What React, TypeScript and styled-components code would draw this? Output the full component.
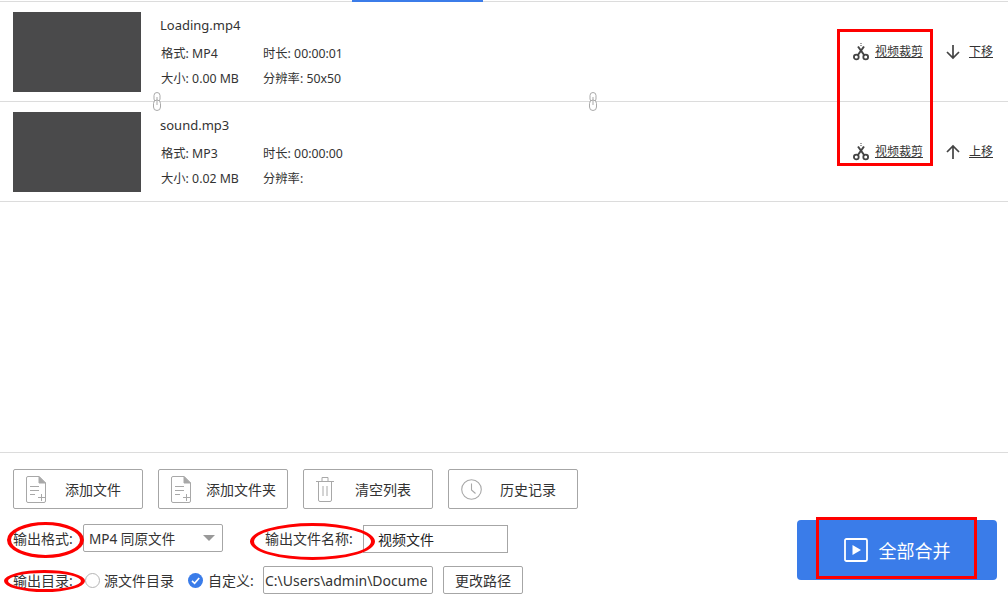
import React from "react";
import styled, { createGlobalStyle } from "styled-components";

const GlobalStyle = createGlobalStyle`
  html, body {
    margin: 0;
    padding: 0;
    background: #fff;
    font-family: "Noto Sans", "Noto Sans CJK SC", sans-serif;
    color: #333;
  }
  * { box-sizing: border-box; }
`;

const Page = styled.div`
  position: relative;
  width: 1008px;
  height: 601px;
  overflow: hidden;
  display: flex;
  flex-direction: column;
  background: #fff;
`;

const TabBar = styled.div`
  height: 2px;
  padding-left: 352px;
  border-bottom: 1px solid #dcdcdc;
  flex: none;
`;

const ActiveTab = styled.div`
  width: 131px;
  height: 2px;
  background: #3b7ce9;
`;

const List = styled.div`
  flex: 1;
`;

const Row = styled.div`
  height: 100px;
  display: flex;
  align-items: flex-start;
  padding: 10px 15px 0 13px;
  border-bottom: 1px solid #dcdcdc;
`;

const Thumb = styled.div`
  width: 128px;
  height: 80px;
  background: #4a4a4b;
  flex: none;
`;

const Info = styled.div`
  margin-left: 19px;
  width: 300px;
`;

const FileName = styled.div`
  font-size: 13px;
  line-height: 18px;
  margin-top: 4px;
  margin-bottom: 7px;
`;

const MetaGrid = styled.div`
  display: grid;
  grid-template-columns: 102px 1fr;
  grid-auto-rows: 25px;
  font-size: 12.3px;
  line-height: 25px;
  padding-left: 1px;
`;

const Actions = styled.div`
  margin-left: auto;
  display: flex;
  align-items: center;
  height: 18px;
  margin-top: 31px;
`;

const ActionIcon = styled.svg`
  width: 16px;
  height: 18px;
  flex: none;
  color: #444;
`;

const ActionLink = styled.a<{ $gap: number }>`
  font-size: 12px;
  line-height: 18px;
  color: #333;
  text-decoration: underline;
  margin-left: ${(p) => p.$gap}px;
`;

const ActionGroup = styled.div<{ $left: number }>`
  display: flex;
  align-items: center;
  margin-left: ${(p) => p.$left}px;
`;

const Footer = styled.div`
  flex: none;
  height: 149px;
  border-top: 1px solid #dcdcdc;
  padding: 16px 11px 0 13px;
`;

const Toolbar = styled.div`
  display: flex;
  gap: 15px;
`;

const ToolButton = styled.button`
  width: 130px;
  height: 40px;
  padding: 0;
  background: #fff;
  border: 1px solid #a6a6a6;
  border-radius: 2px;
  display: flex;
  align-items: center;
  font-family: inherit;
  font-size: 14px;
  color: #333;
`;

const ToolIconBox = styled.span`
  width: 47px;
  height: 27px;
  display: flex;
  align-items: center;
  padding-left: 12px;
  flex: none;
`;

const ToolLabel = styled.span<{ $left: number }>`
  margin-left: ${(p) => p.$left}px;
  white-space: nowrap;
`;

const Options = styled.div`
  display: flex;
  justify-content: space-between;
`;

const OptionRows = styled.div`
  padding-top: 15px;
`;

const OptionRow = styled.div`
  display: flex;
  align-items: center;
  height: 28px;
  margin-bottom: 14px;
  font-size: 14px;
`;

const FieldLabel = styled.span<{ $width: number }>`
  white-space: nowrap;
  width: ${(p) => p.$width}px;
  flex: none;
`;

const SelectBox = styled.div`
  width: 140px;
  height: 28px;
  border: 1px solid #a6a6a6;
  border-radius: 2px;
  display: flex;
  align-items: center;
  padding: 0 6px 0 5px;
  justify-content: space-between;
  font-size: 13.6px;
`;

const Caret = styled.span`
  width: 0;
  height: 0;
  border-left: 6px solid transparent;
  border-right: 6px solid transparent;
  border-top: 6px solid #999;
  margin-right: 1px;
`;

const NameLabel = styled(FieldLabel)`
  margin-left: 42px;
`;

const TextBox = styled.div<{ $width: number; $pad: number; $radius?: number }>`
  height: 28px;
  width: ${(p) => p.$width}px;
  border: 1px solid #a6a6a6;
  border-radius: ${(p) => p.$radius ?? 0}px;
  padding: 0 ${(p) => p.$pad}px;
  display: flex;
  align-items: center;
  overflow: hidden;
  white-space: nowrap;
  font-size: 14px;
  flex: none;
`;

const NameValue = styled(TextBox)`
  margin-top: 2px;
  color: #222;
`;

const RadioEmpty = styled.span`
  width: 15px;
  height: 15px;
  border-radius: 50%;
  border: 1px solid #b5b5b5;
  background: #fff;
  margin-right: 4px;
  flex: none;
`;

const RadioChecked = styled.svg`
  width: 15px;
  height: 15px;
  margin-left: 14px;
  margin-right: 5px;
  flex: none;
`;

const PlainText = styled.span<{ $width: number }>`
  white-space: nowrap;
  width: ${(p) => p.$width}px;
  flex: none;
`;

const PathButton = styled.button`
  width: 80px;
  height: 28px;
  margin-left: 10px;
  padding: 0;
  background: #fff;
  border: 1px solid #a6a6a6;
  border-radius: 2px;
  font-family: inherit;
  font-size: 14px;
  color: #333;
`;

const PathValue = styled(TextBox)`
  margin-left: 8px;
`;

const MergeButton = styled.button`
  width: 200px;
  height: 60px;
  margin-top: 11px;
  border: 0;
  border-radius: 4px;
  background: #3a7ce9;
  color: #fff;
  display: flex;
  align-items: center;
  justify-content: center;
  gap: 11px;
  font-family: inherit;
  font-size: 18px;
  padding: 0;
`;

const Chain = styled.svg<{ $left: number }>`
  position: absolute;
  top: 92px;
  left: ${(p) => p.$left}px;
  width: 8px;
  height: 19px;
`;

type BoxProps = { $x: number; $y: number; $w: number; $h: number };

const RedBox = styled.div<BoxProps>`
  position: absolute;
  border: 3px solid #fe0000;
  left: ${(p) => p.$x}px;
  top: ${(p) => p.$y}px;
  width: ${(p) => p.$w}px;
  height: ${(p) => p.$h}px;
`;

const RedOval = styled(RedBox)`
  border-radius: 50%;
  border-width: 3px 4px;
`;

const Scissors = () => (
  <ActionIcon viewBox="0 0 16 18" fill="none" stroke="currentColor">
    <path d="M8 0v4" strokeWidth="1" strokeDasharray="1 1" />
    <path d="M5 3.500L11.500 12.500" strokeWidth="2" />
    <path d="M11 3.500L4.500 12.500" strokeWidth="2" />
    <circle cx="3.300" cy="14" r="2.400" strokeWidth="1.800" />
    <circle cx="12.700" cy="14" r="2.400" strokeWidth="1.800" />
  </ActionIcon>
);

const ArrowIcon = ({ up }: { up?: boolean }) => (
  <ActionIcon viewBox="0 0 16 18" fill="none" stroke="currentColor" strokeWidth="1.700">
    {up ? (
      <path d="M8 16V3M2 9l6-6 6 6" />
    ) : (
      <path d="M8 2v13M2 9l6 6 6-6" />
    )}
  </ActionIcon>
);

const FileIcon = () => (
  <svg width="20" height="27" viewBox="0 0 20 27" fill="none" stroke="#a8a8a8">
    <path d="M13 .5H2A1.500 1.500 0 0 0 .5 2v23A1.500 1.500 0 0 0 2 26.500h16a1.500 1.500 0 0 0 1.500-1.500V7z" />
    <path d="M13 .5L19.500 7H13z" fill="#a8a8a8" />
    <path d="M4 10.500h9M4 14.500h9M4 18.500h5M12 21.500h7M15.500 18v7" />
  </svg>
);

const TrashIcon = () => (
  <svg width="18" height="26" viewBox="0 0 18 26" fill="none" stroke="#a8a8a8">
    <path d="M0 5.500h18M6 5.500V1.500h6v4M2.500 5.500V24a1.500 1.500 0 0 0 1.500 1.500h10a1.500 1.500 0 0 0 1.500-1.500V5.500M7 10v10M11 10v10" />
  </svg>
);

const ClockIcon = () => (
  <svg width="21" height="21" viewBox="0 0 21 21" fill="none" stroke="#a8a8a8" strokeWidth="1.100">
    <circle cx="10.500" cy="10.500" r="9.800" />
    <path d="M10.500 4.500v6.500l4 3.500" />
  </svg>
);

const ChainLink = ({ left }: { left: number }) => (
  <Chain $left={left} viewBox="0 0 8 19" fill="#fff" stroke="#a9a9a9">
    <rect x="1" y="0.500" width="6" height="9.500" rx="3" />
    <rect x="0.500" y="8" width="7" height="10.500" rx="3.500" />
    <path d="M4 5v8" />
  </Chain>
);

type MediaFile = {
  name: string;
  format: string;
  duration: string;
  size: string;
  resolution: string;
  move: string;
  up: boolean;
};

const files: MediaFile[] = [
  { name: "Loading.mp4", format: "MP4", duration: "00:00:01", size: "0.00 MB", resolution: "50x50", move: "下移", up: false },
  { name: "sound.mp3", format: "MP3", duration: "00:00:00", size: "0.02 MB", resolution: "", move: "上移", up: true },
];

const toolButtons = [
  { label: "添加文件", icon: <FileIcon />, left: 4 },
  { label: "添加文件夹", icon: <FileIcon />, left: 0 },
  { label: "清空列表", icon: <TrashIcon />, left: 4 },
  { label: "历史记录", icon: <ClockIcon />, left: 4 },
];

const App = () => {
  return (
    <Page>
      <GlobalStyle />
      <TabBar>
        <ActiveTab />
      </TabBar>
      <List>
        {files.map((f) => (
          <Row key={f.name}>
            <Thumb />
            <Info>
              <FileName>{f.name}</FileName>
              <MetaGrid>
                <span>格式: {f.format}</span>
                <span>时长: {f.duration}</span>
                <span>大小: {f.size}</span>
                <span>分辨率: {f.resolution}</span>
              </MetaGrid>
            </Info>
            <Actions>
              <ActionGroup $left={0}>
                <Scissors />
                <ActionLink $gap={6}>视频裁剪</ActionLink>
              </ActionGroup>
              <ActionGroup $left={22}>
                <ArrowIcon up={f.up} />
                <ActionLink $gap={8}>{f.move}</ActionLink>
              </ActionGroup>
            </Actions>
          </Row>
        ))}
      </List>
      <Footer>
        <Toolbar>
          {toolButtons.map((b) => (
            <ToolButton key={b.label}>
              <ToolIconBox>{b.icon}</ToolIconBox>
              <ToolLabel $left={b.left}>{b.label}</ToolLabel>
            </ToolButton>
          ))}
        </Toolbar>
        <Options>
          <OptionRows>
            <OptionRow>
              <FieldLabel $width={70}>输出格式:</FieldLabel>
              <SelectBox>
                MP4 同原文件
                <Caret />
              </SelectBox>
              <NameLabel $width={98}>输出文件名称:</NameLabel>
              <NameValue $width={145} $pad={14}>视频文件</NameValue>
            </OptionRow>
            <OptionRow>
              <FieldLabel $width={72}>输出目录:</FieldLabel>
              <RadioEmpty />
              <PlainText $width={70}>源文件目录</PlainText>
              <RadioChecked viewBox="0 0 15 15">
                <circle cx="7.500" cy="7.500" r="7.500" fill="#3a7ce9" />
                <path d="M4 7.800l2.600 2.500L11.200 5" fill="none" stroke="#fff" strokeWidth="1.600" />
              </RadioChecked>
              <PlainText $width={47}>自定义:</PlainText>
              <PathValue $width={170} $pad={1} $radius={2}>C:\Users\admin\Docume</PathValue>
              <PathButton>更改路径</PathButton>
            </OptionRow>
          </OptionRows>
          <MergeButton>
            <svg width="24" height="24" viewBox="0 0 24 24" fill="none">
              <rect x="1" y="1" width="22" height="22" rx="1.500" stroke="#fff" strokeWidth="1.800" />
              <path d="M8.500 7v10l8.500-5z" fill="#fff" />
            </svg>
            全部合并
          </MergeButton>
        </Options>
      </Footer>

      <ChainLink left={153} />
      <ChainLink left={589} />

      <RedBox $x={837} $y={29} $w={96} $h={137} />
      <RedBox $x={816} $y={517} $w={161} $h={62} />
      <RedOval $x={7} $y={522} $w={77} $h={36} />
      <RedOval $x={250} $y={523} $w={125} $h={37} />
      <RedOval $x={4} $y={570} $w={81} $h={22} />
    </Page>
  );
};

export default App;
